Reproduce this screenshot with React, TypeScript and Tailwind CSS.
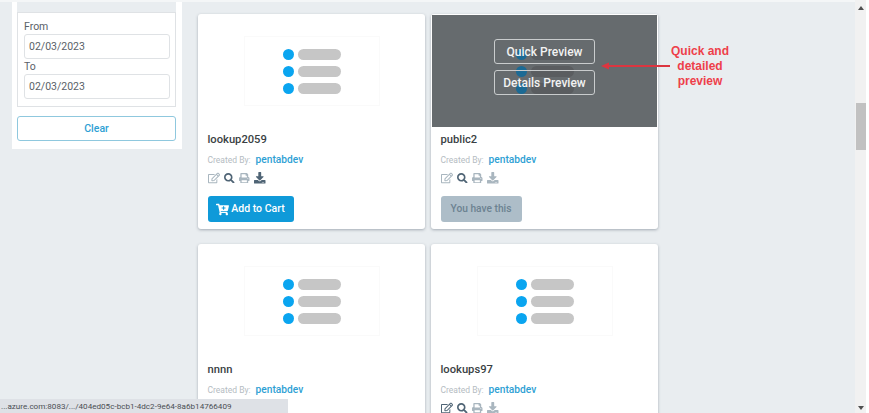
import React from 'react';
import { FaRegEdit, FaSearch, FaPrint, FaDownload, FaCartPlus } from 'react-icons/fa';

const cards = [
  { name: 'lookup2059', action: 'cart', download: 'text-[#4f6475]', edit: 'text-[#a9b6bf]' },
  { name: 'public2', action: 'owned', download: 'text-[#a9b6bf]', edit: 'text-[#a9b6bf]', hover: true },
  { name: 'nnnn', action: 'none', download: 'text-[#4f6475]', edit: 'text-[#a9b6bf]' },
  { name: 'lookups97', action: 'none', download: 'text-[#a9b6bf]', edit: 'text-[#4f6475]' },
];

// placeholder list picture in the card header
const ListArt: React.FC<{ dim?: boolean }> = ({ dim }) => (
  <div className={`w-[136px] h-[70px] border flex flex-col items-center justify-center gap-[6px] ${dim ? 'border-transparent' : 'border-[#fafafa]'}`}>
    {[0, 1, 2].map((i) => (
      <div key={i} className="flex items-center gap-[4px]">
        <div className={`w-[11px] h-[11px] rounded-full ${dim ? 'bg-[#1c6a94]' : 'bg-[#0aa5f0]'}`} />
        <div className={`w-[43px] h-[11px] rounded-[6px] ${dim ? 'bg-[#5a5d60]' : 'bg-[#c6c6c6]'}`} />
      </div>
    ))}
  </div>
);

const Card: React.FC<{ card: (typeof cards)[number] }> = ({ card }) => (
  <div className="w-[227px] h-[215px] bg-white rounded-[3px] shadow-[0_1px_3px_rgba(60,75,90,0.4)] flex flex-col shrink-0">
    <div className={`relative mx-[1px] mt-[1px] h-[112px] flex items-center justify-center ${card.hover ? 'bg-[#666b6e]' : ''}`}>
      <ListArt dim={card.hover} />
      {card.hover && (
        <div className="absolute inset-0 flex flex-col items-center justify-center gap-[6px] pb-[8px]">
          <div className="w-[101px] h-[25px] border border-[#c9cccd] rounded-[3px] flex items-center justify-center text-[12px] font-medium text-[#f2f2f2]">
            Quick Preview
          </div>
          <div className="w-[101px] h-[25px] border border-[#c9cccd] rounded-[3px] flex items-center justify-center text-[12px] font-medium text-[#f2f2f2]">
            Details Preview
          </div>
        </div>
      )}
    </div>
    <div className="flex flex-col px-[9.5px]">
      <div className="mt-[5px] h-[16px] leading-[16px] text-[11.2px] font-medium text-[#3a3f44]">{card.name}</div>
      <div className="mt-[4px] h-[16px] flex items-center gap-[5px]">
        <span className="text-[8.5px] text-[#b5bcc2]">Created By:</span>
        <span className="text-[10.2px] font-medium text-[#2e9fd4]">pentabdev</span>
      </div>
      <div className="mt-[3px] h-[14px] flex items-center gap-[4.5px]">
        <FaRegEdit className={`w-[12px] h-[12px] ${card.edit}`} />
        <FaSearch className="w-[10.5px] h-[10.5px] text-[#4f6475]" />
        <FaPrint className="w-[10.5px] h-[10.5px] text-[#a9b6bf]" />
        <FaDownload className={`w-[11.5px] h-[11.5px] ${card.download}`} />
      </div>
      {card.action === 'cart' && (
        <div className="mt-[11px] w-[86px] h-[26px] rounded-[3px] bg-[#0f9ad9] flex items-center justify-center gap-[2px] text-[10.5px] font-medium text-white">
          <FaCartPlus className="w-[13px] h-[13px]" />
          Add to Cart
        </div>
      )}
      {card.action === 'owned' && (
        <div className="mt-[11px] w-[81px] h-[26px] rounded-[3px] bg-[#adbdc8] flex items-center justify-center text-[10.2px] font-medium text-[#6c8291]">
          You have this
        </div>
      )}
    </div>
  </div>
);

const DateField: React.FC<{ label: string; tight?: boolean }> = ({ label, tight }) => (
  <div className={tight ? 'mt-[1px]' : ''}>
    <div className="h-[14px] leading-[14px] text-[10.5px] text-[#5a6168]">{label}</div>
    <div className="h-[25px] border border-[#dfe2e5] rounded-[3px] px-[4px] flex items-center text-[10.5px] text-[#5a6168]">
      02/03/2023
    </div>
  </div>
);

export default function App() {
  return (
    <div className="relative w-[869px] h-[413px] overflow-hidden bg-white flex font-['Roboto',sans-serif]">
      <div className="flex-1 flex flex-col min-w-0 bg-[#e9edf0]">
        <div className="h-[2px] bg-[#f4f6f7] shrink-0" />
        <div className="flex flex-1 min-h-0">
          {/* Filter sidebar */}
          <aside className="ml-[12px] w-[170px] h-[147px] bg-white pl-[5px] pr-[6px] flex flex-col shrink-0">
            <div className="h-[10px] bg-[#e9edf0]" />
            <div className="h-[95px] border border-[#dfe2e5] pl-[6px] pr-[5px] pt-[7px] flex flex-col">
              <DateField label="From" />
              <DateField label="To" tight />
            </div>
            <div className="mt-[9px] h-[25px] border border-[#8fc8de] rounded-[3px] flex items-center justify-center text-[10.5px] font-medium text-[#2e9fd4]">
              Clear
            </div>
          </aside>

          {/* Lookup cards */}
          <main className="ml-[16px] pt-[12px] grid grid-cols-[227px_227px] gap-x-[6px] gap-y-[15px] content-start">
            {cards.map((card) => (
              <Card key={card.name} card={card} />
            ))}
          </main>
        </div>
      </div>

      {/* Scrollbar */}
      <div className="w-[11px] bg-[#f1f1f1] flex flex-col items-center shrink-0">
        <div className="mt-[6px] w-0 h-0 border-x-[3px] border-x-transparent border-b-[4px] border-b-[#505050]" />
        <div className="mt-[93px] w-[10px] h-[47px] bg-[#c1c1c1]" />
        <div className="mt-auto mb-[3px] w-0 h-0 border-x-[3px] border-x-transparent border-t-[4px] border-t-[#505050]" />
      </div>
      <div className="w-[3px] shrink-0" />

      {/* Annotation over the screenshot */}
      <div className="absolute left-[663px] top-[44px] w-[74px] text-center text-[12px] leading-[15px] font-bold text-[#ee3f4a] font-['Liberation_Sans',sans-serif]">
        Quick and detailed preview
      </div>
      <svg className="absolute left-[598px] top-[61px]" width="72" height="10" viewBox="0 0 72 10">
        <path d="M72 5H8" stroke="#dc3540" strokeWidth="2" />
        <path d="M3 5l8-3.5v7z" fill="#dc3540" />
      </svg>

      {/* Browser status bubble */}
      <div className="absolute left-0 bottom-0 w-[288px] h-[14px] bg-[#dee1e6] pl-[1px] flex items-center text-[8.1px] text-[#4b4f54]">
        ...azure.com:8083/.../404ed05c-bcb1-4dc2-9e64-8a6b14766409
      </div>
    </div>
  );
}
